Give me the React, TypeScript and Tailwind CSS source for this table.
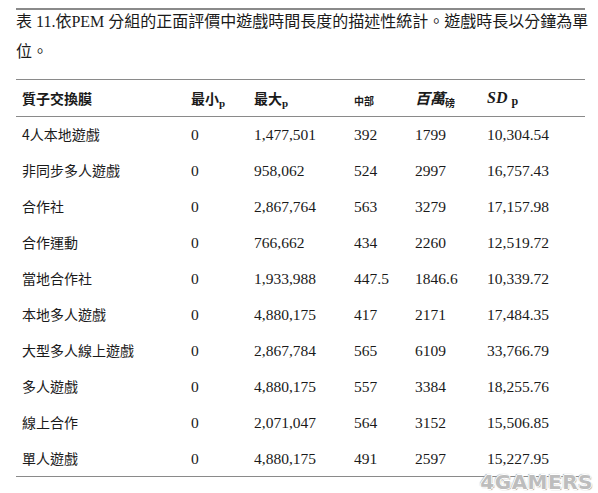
const sans = "font-['Noto_Sans_CJK_TC','Noto_Sans',sans-serif]";
const serif = "font-['Liberation_Serif','Noto_Sans_CJK_TC',serif]";

const rows: [string, string, string, string, string, string][] = [
  ['4人本地遊戲', '0', '1,477,501', '392', '1799', '10,304.54'],
  ['非同步多人遊戲', '0', '958,062', '524', '2997', '16,757.43'],
  ['合作社', '0', '2,867,764', '563', '3279', '17,157.98'],
  ['合作運動', '0', '766,662', '434', '2260', '12,519.72'],
  ['當地合作社', '0', '1,933,988', '447.5', '1846.6', '10,339.72'],
  ['本地多人遊戲', '0', '4,880,175', '417', '2171', '17,484.35'],
  ['大型多人線上遊戲', '0', '2,867,784', '565', '6109', '33,766.79'],
  ['多人遊戲', '0', '4,880,175', '557', '3384', '18,255.76'],
  ['線上合作', '0', '2,071,047', '564', '3152', '15,506.85'],
  ['單人遊戲', '0', '4,880,175', '491', '2597', '15,227.95'],
];

export default function App() {
  return (
    <div className="relative h-[493px] w-[598px] overflow-hidden bg-white text-[#1a1a1a]">
      <div className="px-[16px] pt-[8px] pr-[13px]">
        <div className="h-[2px] bg-[#8a8a8a]" />

        {/* Caption: Latin falls to the serif, CJK to Noto */}
        <p className={`${serif} -mr-[10px] -mt-[3px] text-[16px] leading-[30px]`}>
          表 11.依PEM 分組的正面評價中遊戲時間長度的描述性統計。遊戲時長以分鐘為單位。
        </p>

        <table className="mt-[12px] w-full table-fixed border-collapse">
          <colgroup>
            <col className="w-[169px]" />
            <col className="w-[63px]" />
            <col className="w-[100px]" />
            <col className="w-[61px]" />
            <col className="w-[72px]" />
            <col />
          </colgroup>
          <thead>
            <tr className="h-[37px] border-y border-[#8a8a8a] text-left">
              <th className={`${sans} pl-[6px] text-[14px] font-bold`}>質子交換膜</th>
              <th className={`${sans} pl-[6px] text-[14px] font-bold`}>
                最小<span className={`${serif} relative top-[3px] text-[11px]`}>p</span>
              </th>
              <th className={`${sans} pl-[6px] text-[14px] font-bold`}>
                最大<span className={`${serif} relative top-[3px] text-[11px]`}>p</span>
              </th>
              <th className={`${sans} pl-[6px] pt-[4px] text-[10px] font-bold`}>中部</th>
              <th className={`${sans} pl-[6px] text-[15px] font-bold italic`}>
                百萬<span className="relative top-[3px] text-[10px] not-italic">磅</span>
              </th>
              <th className={`${serif} pl-[6px] text-[16px] font-bold`}>
                <span className="italic">SD</span>{' '}
                <span className="relative top-[2px] text-[12px]">p</span>
              </th>
            </tr>
          </thead>
          <tbody className="text-[15.5px]">
            {rows.map((r, i) => (
              <tr key={i} className={`h-[36px] ${i === rows.length - 1 ? 'border-b border-[#8a8a8a]' : ''}`}>
                <td className={`${sans} pl-[6px] text-[14px]`}>{r[0]}</td>
                {r.slice(1).map((v, j) => (
                  <td key={j} className={`${serif} pl-[6px]`}>
                    {v}
                  </td>
                ))}
              </tr>
            ))}
          </tbody>
        </table>
      </div>

      {/* watermark */}
      <div className="absolute bottom-[0px] right-[5px] font-['DejaVu_Sans',sans-serif] text-[20px] font-black leading-[22px] tracking-[0.5px] text-[#bdbdbd] [text-shadow:1px_0_0_#fff,-1px_0_0_#fff,0_1px_0_#fff,0_-1px_0_#fff,1px_1px_1px_#8f8f8f,-1px_-1px_1px_#a8a8a8]">
        4GAMERS
      </div>
    </div>
  );
}
